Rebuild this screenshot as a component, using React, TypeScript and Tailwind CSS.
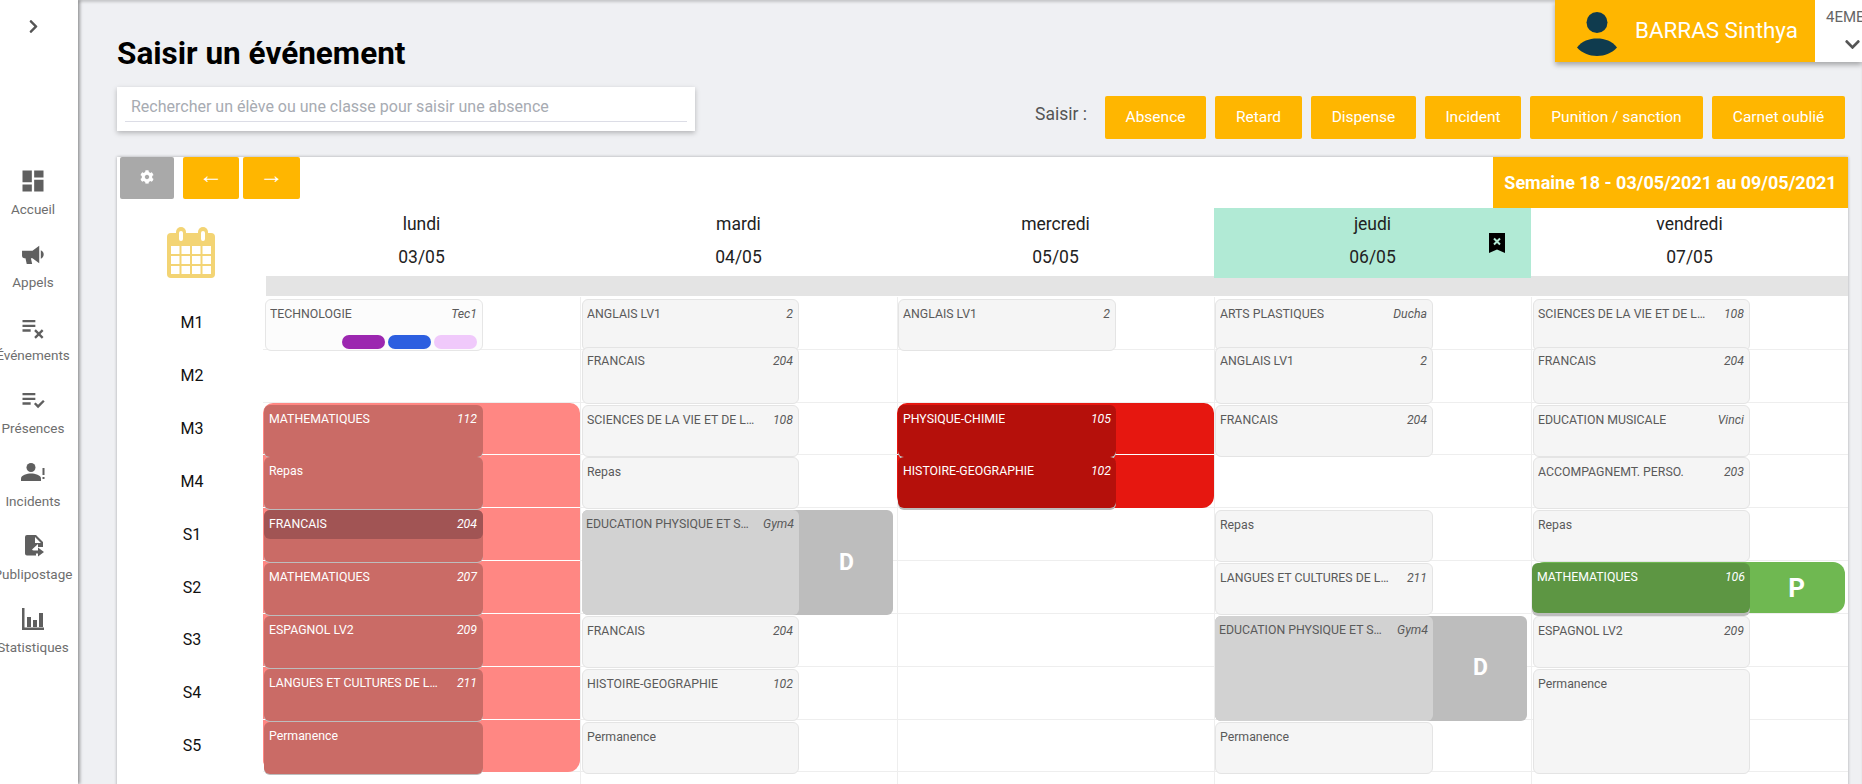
import { FC, ReactNode } from "react";
import { FaChevronDown, FaChevronRight, FaCog } from "react-icons/fa";
import { MdDashboard, MdPlaylistAddCheck, MdPlaylistRemove } from "react-icons/md";

const Megaphone = () => (
  <svg viewBox="0 0 24 24" className="w-[25px] h-[25px]" fill="currentColor">
    <path d="M1 8.500h10L17.500 3.500v17L11 15.500H9.500l1.200 5.500H5.500l-1.200-5.500H3a2 2 0 0 1-2-2z" />
    <path d="M19 8c1.800.7 2.800 2.300 2.800 4s-1 3.300-2.800 4z" />
  </svg>
);

const PersonAlert = () => (
  <svg viewBox="0 0 24 24" className="w-[24px] h-[24px]" fill="currentColor">
    <circle cx="10" cy="6.500" r="4.500" />
    <path d="M0 20v-2.500c0-3.500 6-5 10-5s10 1.500 10 5V20z" />
    <rect x="21.500" y="7" width="2" height="7" />
    <rect x="21.500" y="16" width="2" height="2" />
  </svg>
);

const FileSend = () => (
  <svg viewBox="0 0 24 24" className="w-[24px] h-[24px]" fill="currentColor">
    <path d="M6 1h9l7 7v5h-5v-3l-6 5.500 4 4v2H6a2 2 0 0 1-2-2V3a2 2 0 0 1 2-2zM14 3v6h6z" fillRule="evenodd" />
    <path d="M17 13.500l6 4.500-6 4.500v-3h-5v-3h5z" />
  </svg>
);

const Bars = () => (
  <svg viewBox="0 0 24 24" className="w-[24px] h-[24px]" fill="currentColor">
    <path d="M1 1h2.500v19.500H23V23H1z" />
    <rect x="6" y="10" width="4" height="10" />
    <rect x="12" y="13" width="4" height="7" />
    <rect x="18" y="6" width="4" height="14" />
  </svg>
);

const menu: { label: string; icon: ReactNode }[] = [
  { label: "Accueil", icon: <MdDashboard size={28} /> },
  { label: "Appels", icon: <Megaphone /> },
  { label: "Événements", icon: <MdPlaylistRemove size={28} /> },
  { label: "Présences", icon: <MdPlaylistAddCheck size={28} /> },
  { label: "Incidents", icon: <PersonAlert /> },
  { label: "Publipostage", icon: <FileSend /> },
  { label: "Statistiques", icon: <Bars /> },
];

const Sidebar = () => (
  <aside className="relative z-20 w-[78px] shrink-0 bg-white shadow-[2px_0_3px_rgba(0,0,0,0.35)] overflow-hidden">
    <div className="w-[66px] flex justify-center pt-[19px] text-[#555]">
      <FaChevronRight size={15} />
    </div>
    <nav className="w-[66px] mt-[130px] flex flex-col">
      {menu.map((item) => (
        <div key={item.label} className="h-[73px] flex flex-col items-center text-[#5f5f5f]">
          <div className="h-[34px] flex items-center justify-center">{item.icon}</div>
          <span className="mt-[2px] text-[13.500px] leading-[18px] text-[#6e6e6e] whitespace-nowrap">{item.label}</span>
        </div>
      ))}
    </nav>
  </aside>
);

const actions = [
  { label: "Absence", width: "w-[101px]" },
  { label: "Retard", width: "w-[87px]" },
  { label: "Dispense", width: "w-[105px]" },
  { label: "Incident", width: "w-[96px]" },
  { label: "Punition / sanction", width: "w-[173px]" },
  { label: "Carnet oublié", width: "w-[133px]" },
];

const UserBox = () => (
  <div className="flex h-[62px] shadow-[0_3px_5px_rgba(0,0,0,0.3)]">
    <div className="w-[260px] bg-[#ffb600] flex items-center">
      <svg viewBox="0 0 40 44" className="ml-[22px] mt-[6px] w-[40px] h-[44px]" fill="#0f3b4e">
        <circle cx="20" cy="10.500" r="10.500" />
        <path d="M0 35.500C5 29 12 26.500 20 26.500S35 29 40 35.500C35 41 28 44 20 44S5 41 0 35.500z" />
      </svg>
      <span className="ml-[18px] text-[22.400px] text-white whitespace-nowrap">BARRAS Sinthya</span>
    </div>
    <div className="w-[47px] bg-white overflow-hidden pl-[11px] pt-[7px] text-[#666]">
      <div className="text-[15px] leading-[20px] whitespace-nowrap">4EME</div>
      <FaChevronDown size={17} className="mt-[9px] ml-[18px] text-[#555]" />
    </div>
  </div>
);

const CalendarIcon = () => (
  <svg viewBox="0 0 48 51" className="w-[48px] h-[51px]">
    <rect x="0" y="6" width="48" height="45" rx="4" fill="#f3d474" />
    <rect x="9" y="0" width="10" height="16" rx="5" fill="#f3d474" />
    <rect x="31" y="0" width="10" height="16" rx="5" fill="#f3d474" />
    <rect x="12" y="4" width="4" height="10" rx="2" fill="#fff" />
    <rect x="34" y="4" width="4" height="10" rx="2" fill="#fff" />
    {[19, 29, 39].map((y) =>
      [4, 14.500, 25, 35.500].map((x) => <rect key={`${x}-${y}`} x={x} y={y} width="8.500" height="8" fill="#fff" />)
    )}
  </svg>
);

const days = [
  { day: "lundi", date: "03/05" },
  { day: "mardi", date: "04/05" },
  { day: "mercredi", date: "05/05" },
  { day: "jeudi", date: "06/05", today: true },
  { day: "vendredi", date: "07/05" },
];

const slots = ["M1", "M2", "M3", "M4", "S1", "S2", "S3", "S4", "S5"];

type Tone = "plain" | "light" | "pink" | "pinkDeep" | "red" | "grey" | "green";

const tones: Record<Tone, string> = {
  plain: "bg-[#f5f5f5] border border-[#e4e4e4] text-[#5a5a5a]",
  light: "bg-[#fcfcfc] border border-[#e6e6e6] text-[#5a5a5a] !w-[218px]",
  pink: "bg-[#ca6b66] shadow-[0_1px_0_#bdbdbd] text-white !ml-[1px] !w-[219px] !pl-[5px] !pr-[5px]",
  pinkDeep: "bg-[#a15454] text-white !ml-[1px] !w-[219px] !pl-[5px] !pr-[5px]",
  red: "bg-[#b5100b] shadow-[0_2px_0_#bdbdbd] text-white !pl-[5px]",
  grey: "bg-[#d2d2d2] text-[#5a5a5a]",
  green: "bg-[#5d9643] shadow-[0_3px_0_#bdbdbd] text-white !ml-[1px] !w-[218px] !pl-[5px]",
};

const offsets: Record<number, string> = {
  1: "ml-[2px] w-[217px]",
  2: "ml-[2px] w-[217px]",
  3: "ml-[1px] w-[218px]",
  4: "ml-[1px] w-[218px]",
  5: "ml-[2px] w-[217px]",
};

interface EventItem {
  col: number;
  row: number;
  span?: number;
  title: string;
  room?: string;
  tone?: Tone;
  height?: string;
  lifted?: boolean;
  pills?: boolean;
}

const events: EventItem[] = [
  { col: 1, row: 1, title: "TECHNOLOGIE", room: "Tec1", tone: "light", pills: true },
  { col: 1, row: 3, title: "MATHEMATIQUES", room: "112", tone: "pink" },
  { col: 1, row: 4, title: "Repas", tone: "pink" },
  { col: 1, row: 5, title: "", tone: "pink" },
  { col: 1, row: 5, title: "FRANCAIS", room: "204", tone: "pinkDeep", height: "h-[29px]" },
  { col: 1, row: 6, title: "MATHEMATIQUES", room: "207", tone: "pink" },
  { col: 1, row: 7, title: "ESPAGNOL LV2", room: "209", tone: "pink" },
  { col: 1, row: 8, title: "LANGUES ET CULTURES DE L'ANTIQUITE", room: "211", tone: "pink" },
  { col: 1, row: 9, title: "Permanence", tone: "pink" },

  { col: 2, row: 1, title: "ANGLAIS LV1", room: "2" },
  { col: 2, row: 2, title: "FRANCAIS", room: "204", lifted: true },
  { col: 2, row: 3, title: "SCIENCES DE LA VIE ET DE LA TERRE", room: "108" },
  { col: 2, row: 4, title: "Repas" },
  { col: 2, row: 5, span: 2, title: "EDUCATION PHYSIQUE ET SPORTIVE", room: "Gym4", tone: "grey" },
  { col: 2, row: 7, title: "FRANCAIS", room: "204" },
  { col: 2, row: 8, title: "HISTOIRE-GEOGRAPHIE", room: "102" },
  { col: 2, row: 9, title: "Permanence" },

  { col: 3, row: 1, title: "ANGLAIS LV1", room: "2" },
  { col: 3, row: 3, title: "PHYSIQUE-CHIMIE", room: "105", tone: "red" },
  { col: 3, row: 4, title: "HISTOIRE-GEOGRAPHIE", room: "102", tone: "red", height: "h-[51px]" },

  { col: 4, row: 1, title: "ARTS PLASTIQUES", room: "Ducha" },
  { col: 4, row: 2, title: "ANGLAIS LV1", room: "2", lifted: true },
  { col: 4, row: 3, title: "FRANCAIS", room: "204" },
  { col: 4, row: 5, title: "Repas" },
  { col: 4, row: 6, title: "LANGUES ET CULTURES DE L'ANTIQUITE", room: "211" },
  { col: 4, row: 7, span: 2, title: "EDUCATION PHYSIQUE ET SPORTIVE", room: "Gym4", tone: "grey" },
  { col: 4, row: 9, title: "Permanence" },

  { col: 5, row: 1, title: "SCIENCES DE LA VIE ET DE LA TERRE", room: "108" },
  { col: 5, row: 2, title: "FRANCAIS", room: "204", lifted: true },
  { col: 5, row: 3, title: "EDUCATION MUSICALE", room: "Vinci" },
  { col: 5, row: 4, title: "ACCOMPAGNEMT. PERSO.", room: "203" },
  { col: 5, row: 5, title: "Repas" },
  { col: 5, row: 6, title: "MATHEMATIQUES", room: "106", tone: "green", height: "h-[50px]" },
  { col: 5, row: 7, title: "ESPAGNOL LV2", room: "209" },
  { col: 5, row: 8, span: 2, title: "Permanence" },
];

const place = (col: number, row: number, span = 1) => ({
  gridColumn: col + 1,
  gridRow: `${row} / span ${span}`,
});

const Event: FC<EventItem> = ({ col, row, span = 1, title, room, tone = "plain", height, lifted, pills }) => (
  <div
    style={place(col, row, span)}
    className={`relative z-20 self-start rounded-[6px] px-[4px] text-[12.300px] leading-[14px] ${offsets[col]} ${tones[tone]} ${lifted ? "-mt-[3px] h-[57px] pt-[6px]" : "mt-[2px] pt-[7px]"} ${height ?? (span === 2 ? "h-[105px]" : lifted ? "" : "h-[52px]")}`}
  >
    <div className="flex justify-between pr-[1px]">
      <span className="max-w-[170px] truncate">{title}</span>
      <span className="italic">{room}</span>
    </div>
    {pills && (
      <div className="flex justify-end gap-[3px] mt-[14px] pr-[1px]">
        <span className="w-[43px] h-[14px] rounded-[7px] bg-[#9c27b0]" />
        <span className="w-[43px] h-[14px] rounded-[7px] bg-[#2d5fe0]" />
        <span className="w-[43px] h-[14px] rounded-[7px] bg-[#f0c9fb]" />
      </div>
    )}
  </div>
);

interface BandProps {
  col: number;
  from: number;
  to: number;
  color: string;
}

// coloured strip behind the lessons, the white rules stay visible on it
const Band: FC<BandProps> = ({ col, from, to, color }) => (
  <>
    {Array.from({ length: to - from + 1 }, (_, i) => from + i).map((row) => (
      <div
        key={row}
        style={place(col, row)}
        className={`relative z-10 border-b border-white ${color} ${row === from ? "rounded-t-[10px]" : ""} ${row === to ? "rounded-b-[12px] border-b-0" : ""}`}
      />
    ))}
  </>
);

const Planning = () => (
  <div className="grid grid-cols-[146px_repeat(5,317px)] grid-rows-[repeat(10,52.840px)]">
    {slots.map((slot, i) => (
      <div key={slot} style={{ gridColumn: 1, gridRow: i + 1 }} className="flex items-center justify-center pl-[4px] text-[16px] text-[#111]">
        {slot}
      </div>
    ))}
    {[1, 2, 3, 4, 5].map((col) =>
      Array.from({ length: 10 }, (_, i) => i + 1).map((row) => (
        <div key={`${col}-${row}`} style={place(col, row)} className={`border-b border-[#eeeeee] ${col > 1 ? "border-l" : ""}`} />
      ))
    )}

    <Band col={1} from={3} to={9} color="bg-[#ff8783]" />
    <Band col={3} from={3} to={4} color="bg-[#e61710]" />

    <div style={place(2, 5, 2)} className="relative z-10 self-start ml-[2px] mt-[2px] w-[311px] h-[105px] rounded-[6px] bg-[#bdbdbd] flex items-center justify-end pr-[39px] text-[23px] font-bold text-white">
      D
    </div>
    <div style={place(4, 7, 2)} className="relative z-10 self-start ml-[1px] mt-[2px] w-[312px] h-[105px] rounded-[6px] bg-[#bdbdbd] flex items-center justify-end pr-[39px] text-[23px] font-bold text-white">
      D
    </div>
    <div style={place(5, 6)} className="relative z-10 self-start ml-[1px] mt-[1px] w-[313px] h-[51px] rounded-[12px] bg-[#6fb851] flex items-center justify-end pt-[2px] pr-[40px] text-[26px] font-bold text-white">
      P
    </div>

    {events.map((event, i) => (
      <Event key={i} {...event} />
    ))}
  </div>
);

export default function App() {
  return (
    <div className="w-[1862px] h-[784px] flex overflow-hidden bg-[#eff0f3] font-['Roboto',sans-serif]">
      <Sidebar />
      <main className="relative flex-1 pl-[39px] pr-[14px] shadow-[inset_0_3px_3px_-1px_rgba(0,0,0,0.18)]">
        <header className="h-[87px] flex justify-between items-start">
          <h1 className="mt-[34px] text-[31.500px] leading-[40px] font-bold text-black">Saisir un événement</h1>
          <div className="-mr-[14px]">
            <UserBox />
          </div>
        </header>

        <div className="h-[70px] flex justify-between items-start">
          <div className="w-[578px] h-[44px] bg-white px-[8px] pt-[8px] shadow-[0_2px_5px_rgba(0,0,0,0.25)]">
            <div className="h-[27px] border-b border-[#dcdde6] pl-[6px] pt-[2px] text-[16px] leading-[20px] text-[#a7abb2]">
              Rechercher un élève ou une classe pour saisir une absence
            </div>
          </div>
          <div className="flex items-center gap-[9px] mt-[9px] mr-[3px]">
            <span className="mr-[9px] -mt-[6px] text-[17.500px] text-[#555]">Saisir :</span>
            {actions.map((action) => (
              <button key={action.label} className={`h-[43px] rounded-[2px] bg-[#ffb600] text-[15.500px] text-white whitespace-nowrap ${action.width}`}>
                {action.label}
              </button>
            ))}
          </div>
        </div>

        <section className="w-[1731px] h-[640px] bg-white shadow-[0_0_3px_rgba(0,0,0,0.3)] overflow-hidden">
          <div className="h-[51px] flex items-start justify-between">
            <div className="flex pl-[3px]">
              <button className="w-[54px] h-[42px] rounded-[2px] bg-[#a9a9a9] flex items-center justify-center text-white">
                <FaCog size={14} className="-mt-[2px]" />
              </button>
              <button className="ml-[9px] w-[56px] h-[42px] rounded-[2px] bg-[#ffb600] pb-[6px] text-[24px] leading-[24px] text-white">←</button>
              <button className="ml-[4px] w-[57px] h-[42px] rounded-[2px] bg-[#ffb600] pb-[6px] text-[24px] leading-[24px] text-white">→</button>
            </div>
            <div className="w-[355px] h-[51px] bg-[#ffb600] flex items-center justify-center text-[18px] font-bold text-white">
              Semaine 18 - 03/05/2021 au 09/05/2021
            </div>
          </div>

          <div className="h-[68px] grid grid-cols-[146px_repeat(5,317px)]">
            <div className="flex justify-center pt-[19px] pl-[2px]">
              <CalendarIcon />
            </div>
            {days.map((d) => (
              <div key={d.day} className={`relative flex flex-col items-center pt-[5px] text-[17.500px] leading-[22px] text-[#222] ${d.today ? "bg-[#b1ead5]" : ""}`}>
                <span>{d.day}</span>
                <span className="mt-[11px]">{d.date}</span>
                {d.today && (
                  <svg viewBox="0 0 16 20" className="absolute right-[26px] top-[25px] w-[16px] h-[20px]">
                    <path d="M0 0h16v20l-8-3.500L0 20z" fill="#000" />
                    <path d="M5 5.500l6 6M11 5.500l-6 6" stroke="#b1ead5" strokeWidth="2" />
                  </svg>
                )}
              </div>
            ))}
          </div>

          <div className="h-[20px] ml-[149px] bg-[#e4e4e4]" />
          <div className="mt-[1px]">
            <Planning />
          </div>
        </section>
      </main>
    </div>
  );
}
